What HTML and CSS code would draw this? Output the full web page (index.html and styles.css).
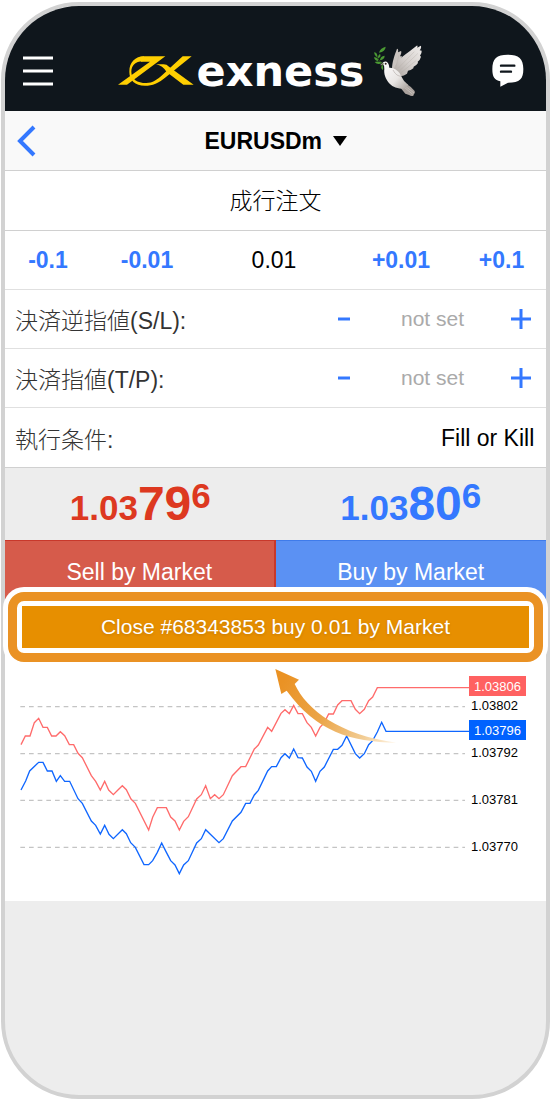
FILE: index.html
```
<!DOCTYPE html>
<html lang="ja">
<head>
    <meta charset="utf-8">
    <meta name="viewport" content="width=device-width, initial-scale=1">
    <title>EURUSDm 成行注文</title>
    <link rel="stylesheet" href="styles.css">
</head>
<body>
<div class="phone">
    <header class="header">
        <button class="icon-btn" type="button" aria-label="menu">
            <svg width="30" height="30" viewBox="0 0 30 30"><path d="M0 2h30M0 15h30M0 28h30" stroke="#fff" stroke-width="3"/></svg>
        </button>
        <div class="logo">
            <svg class="mark" width="78" height="32" viewBox="348 162 234 96" fill="#ffcf01">
                <path d="M415 168Q424 166 432 166H493L378 251H351L447 182H420Z"/>
                <path d="M430 166C402 166 385 184 385 212C385 237 402 254 432 254C455 254 472 247 496 227L572 166H545L484 222C468 236 455 246 436 246C408 246 391 234 391 212C391 194 403 181 425 181Z"/>
                <path d="M465 190Q485 194 497 213L547 251H578L504 197Q497 190 488 190Z"/>
            </svg>
            <span class="brand">exness</span>
            <svg class="dove" width="48" height="52" viewBox="18 12 144 156">
                <defs>
                    <linearGradient id="wing" x1="0" y1="1" x2="1" y2="0">
                        <stop offset="0" stop-color="#aaa39e"/>
                        <stop offset=".5" stop-color="#d6d1ce"/>
                        <stop offset="1" stop-color="#f0edeb"/>
                    </linearGradient>
                    <linearGradient id="body" x1="0" y1="0" x2="1" y2="1">
                        <stop offset="0" stop-color="#fff"/>
                        <stop offset=".6" stop-color="#e9e6e4"/>
                        <stop offset="1" stop-color="#a8a19c"/>
                    </linearGradient>
                </defs>
                <path d="M72 86C72 62 80 42 87 23Q92 24 90 34L99 30Q102 34 96 46L102 46L94 88Z" fill="#c9c3bf"/>
                <path d="M76 88C88 50 118 38 146 14Q150 12 148 20L158 14Q162 18 155 28L161 29Q162 36 156 44L159 47Q157 56 149 62L150 66Q145 74 137 77L136 82Q128 89 120 89L117 98Q108 105 98 106Z" fill="url(#wing)"/>
                <path d="M90 82L139 32M94 90L150 37M98 96L145 58M84 76L93 43" stroke="#b1aaa5" stroke-width="1" fill="none"/>
                <path d="M98 126L117 130Q132 139 140 150Q142 157 138 159L136 164Q130 167 123 162L112 158Q102 144 91 136Z" fill="#aaa29d"/>
                <path d="M108 138L134 160M109 133L138 156" stroke="#d0cac6" stroke-width="2"/>
                <path d="M43 67Q48 59 56 62Q63 66 64 80C80 79 95 91 101 108Q106 121 121 132L109 143Q78 143 65 128C52 114 47 98 49 84Q50 74 43 67Z" fill="url(#body)"/>
                <path d="M75 87Q86 108 101 105" stroke="#b8b1ad" stroke-width="2" fill="none"/>
                <path d="M36 73L43 66L49 70Z" fill="#a79a92"/>
                <circle cx="53" cy="68" r="3" fill="#342824"/>
                <path d="M24 38Q29 61 47 68M44 70L41 82" stroke="#426d2b" stroke-width="2" fill="none"/>
                <g fill="#4b9a33">
                    <path d="M33 35Q36 21 53 17Q52 32 33 35Z"/>
                    <path d="M19 33Q29 36 28 48Q18 44 19 33Z"/>
                    <path d="M30 52Q29 43 36 38Q41 47 30 52Z"/>
                    <path d="M18 49Q29 48 31 60Q20 60 18 49Z"/>
                    <path d="M36 58Q36 46 50 44Q50 55 36 58Z"/>
                    <path d="M20 63Q31 59 42 66Q29 74 20 63Z"/>
                    <path d="M41 71Q48 75 44 88Q38 79 41 71Z"/>
                </g>
            </svg>
        </div>
        <button class="icon-btn" type="button" aria-label="chat">
            <svg width="32" height="33" viewBox="668 160 96 99">
                <path d="M669 206C669 173 682 162 715 162S762 173 762 205C762 235 752 246 716 246L693 258V242C676 239 669 229 669 206Z" fill="#fff"/>
                <path d="M695 195H735M695 213H725" stroke="#0f161c" stroke-width="7" stroke-linecap="round"/>
            </svg>
        </button>
    </header>

    <main class="order">
        <div class="symbol-bar">
            <button class="icon-btn back" type="button" aria-label="back">
                <svg width="20" height="32" viewBox="0 0 20 32"><path d="M17 2L3 16L17 30" fill="none" stroke="#3478ff" stroke-width="4"/></svg>
            </button>
            <div class="symbol">
                <select aria-label="symbol"><option>EURUSDm</option></select>
                <svg width="14" height="10" viewBox="0 0 14 10"><path d="M0 0H14L7 10Z"/></svg>
            </div>
        </div>

        <div class="row type">
            <select aria-label="注文種別"><option>成行注文</option></select>
        </div>

        <div class="row volume">
            <button type="button">-0.1</button>
            <button type="button">-0.01</button>
            <input type="text" value="0.01" aria-label="volume">
            <button type="button">+0.01</button>
            <button type="button">+0.1</button>
        </div>

        <div class="row level">
            <label for="sl">決済逆指値(S/L):</label>
            <button type="button" aria-label="S/L -"><svg width="20" height="20" viewBox="0 0 20 20"><path d="M4 10H16"/></svg></button>
            <input id="sl" type="text" placeholder="not set">
            <button type="button" aria-label="S/L +"><svg width="20" height="20" viewBox="0 0 20 20"><path d="M0 10H20M10 0V20"/></svg></button>
        </div>
        <div class="row level">
            <label for="tp">決済指値(T/P):</label>
            <button type="button" aria-label="T/P -"><svg width="20" height="20" viewBox="0 0 20 20"><path d="M4 10H16"/></svg></button>
            <input id="tp" type="text" placeholder="not set">
            <button type="button" aria-label="T/P +"><svg width="20" height="20" viewBox="0 0 20 20"><path d="M0 10H20M10 0V20"/></svg></button>
        </div>
        <div class="row fill">
            <label for="policy">執行条件:</label>
            <select id="policy"><option>Fill or Kill</option></select>
        </div>

        <div class="prices">
            <div class="price bid">1.03<b>79</b><sup>6</sup></div>
            <div class="price ask">1.03<b>80</b><sup>6</sup></div>
        </div>

        <div class="deal">
            <button class="sell" type="button">Sell by Market</button>
            <button class="buy" type="button">Buy by Market</button>
        </div>
        <div class="close-box">
            <button class="close" type="button">Close #68343853 buy 0.01 by Market</button>
        </div>

        <svg class="chart" viewBox="0 0 541 239">
            <defs>
                <linearGradient id="fade" gradientUnits="userSpaceOnUse" x1="850" y1="60" x2="1190" y2="248">
                    <stop offset="0" stop-color="#ea9224"/>
                    <stop offset=".4" stop-color="#eba548"/>
                    <stop offset=".75" stop-color="#f2cc93"/>
                    <stop offset="1" stop-color="#fff5e6"/>
                </linearGradient>
            </defs>
            <g class="plot" transform="translate(-5 -2) scale(.33333)">
                <path class="grid" d="M61 140H1395M61 281H1395M61 421H1395M61 562H1395"/>
                <polyline class="line-ask" points="63,254 76,228 90,228 103,188 116,175 129,202 142,202 155,228 168,228 181,215 194,227 208,254 221,254 234,280 247,293 274,347 287,364 301,390 314,364 326,390 340,404 353,391 367,377 379,389 393,417 406,430 446,510 458,472 472,443 499,443 512,471 525,483 538,510 551,484 565,470 590,417 604,404 617,377 631,416 644,404 657,416 670,404 697,347 723,320 737,320 763,267 775,255 803,202 815,214 843,160 855,149 868,161 881,136 894,161 907,161 921,188 934,202 947,228 960,202 973,188 986,162 1000,162 1013,135 1026,122 1053,122 1066,148 1079,161 1093,148 1106,122 1118,111 1132,83 1407,83"/>
                <polyline class="line-bid" points="63,390 77,363 89,333 116,307 129,307 142,333 156,333 169,364 181,347 194,364 209,364 234,416 247,430 274,483 287,496 301,522 314,496 327,523 340,536 367,509 379,521 392,548 406,562 432,614 446,614 458,602 472,577 485,549 498,575 512,602 525,615 538,641 551,615 565,602 590,549 604,536 617,509 657,548 670,536 697,483 723,457 737,430 750,430 763,405 775,391 803,333 815,320 829,320 843,293 855,281 868,294 881,267 894,293 907,294 921,321 934,334 947,364 960,334 973,321 1000,268 1013,268 1026,256 1040,228 1066,281 1079,294 1093,281 1106,254 1118,242 1132,216 1145,187 1158,214 1407,214"/>
                <path d="M826 27L897 59L884 72C920 150 1020 225 1190 248C1050 245 950 215 860 92L844 102Z" fill="url(#fade)"/>
            </g>
            <rect x="464" y="14" width="57" height="20" fill="#ff6161"/>
            <rect x="464" y="58" width="57" height="20" fill="#0062ff"/>
            <text class="tag" x="469" y="29">1.03806</text>
            <text class="tag" x="469" y="73">1.03796</text>
            <text x="466" y="48">1.03802</text>
            <text x="466" y="95">1.03792</text>
            <text x="466" y="142">1.03781</text>
            <text x="466" y="189">1.03770</text>
        </svg>
    </main>
</div>
</body>
</html>
```
FILE: styles.css
```
* {
    box-sizing: border-box;
}
body {
    margin: 0;
    padding: 2px 0 1px 1px;
    background: #fff;
    color: #000;
    font-family: "Liberation Sans", "Noto Sans CJK JP", sans-serif;
    font-size: 23px;
}
button, input, select {
    margin: 0;
    padding: 0;
    border: 0;
    border-radius: 0;
    background: none;
    color: inherit;
    font: inherit;
    appearance: none;
}
button, select {
    cursor: pointer;
}
input {
    min-width: 0;
    width: 100%;
    text-align: center;
}
svg {
    display: block;
}
.phone {
    min-height: calc(100vh - 3px);
    border: 4px solid #d2d2d2;
    border-radius: 78px;
    background: #ededed;
}

/* header */
.header {
    display: flex;
    justify-content: space-between;
    align-items: center;
    height: 105px;
    padding: 24px 22px 0 18px;
    border-radius: 74px 74px 0 0;
    background: #0f161c;
}
.logo {
    display: flex;
    align-items: center;
    margin-right: 6px;
}
.brand {
    margin: 0 10px 0 2px;
    color: #fff;
    font: bold 43px/52px "DejaVu Sans", sans-serif;
}

.order {
    background: #fff;
}
.symbol-bar {
    display: grid;
    grid-template-columns: 44px 1fr 44px;
    align-items: center;
    height: 60px;
    border-bottom: 1px solid #d0d0d0;
    background: #f9f9f9;
}
.back {
    padding-left: 12px;
}
.symbol {
    display: flex;
    justify-content: center;
    align-items: center;
    gap: 10px;
    font-weight: bold;
}
.row {
    height: 59px;
    border-bottom: 1px solid #e0e0e0;
}
.row label {
    color: #333;
    font-weight: 300;
}
.type {
    display: flex;
    justify-content: center;
    height: 60px;
    border-color: #d0d0d0;
    font-weight: 300;
}
.volume {
    display: grid;
    grid-template-columns: 86fr 112fr 142fr 112fr 89fr;
}
.volume button {
    color: #3478ff;
    font-weight: bold;
}
.level {
    display: grid;
    grid-template-columns: 1fr 50px 127px 50px;
    align-items: center;
    padding-left: 10px;
}
.level button {
    display: flex;
    justify-content: center;
}
.level path {
    fill: none;
    stroke: #3478ff;
    stroke-width: 3;
}
.level input {
    font-size: 21px;
}
.level input::placeholder {
    color: #aaa;
    opacity: 1;
}
.fill {
    display: flex;
    justify-content: space-between;
    align-items: center;
    height: 60px;
    padding: 0 11px 0 10px;
    border-color: #d0d0d0;
}

/* quotes */
.prices {
    display: grid;
    grid-template-columns: 1fr 1fr;
    height: 72px;
    background: #ededed;
    text-align: center;
}
.price {
    font-size: 35px;
    font-weight: bold;
    line-height: 72px;
    white-space: nowrap;
}
.price b {
    font-size: 48px;
}
.price sup {
    font-size: 35px;
    line-height: 0;
    vertical-align: 12px;
}
.bid {
    color: #dd3820;
}
.ask {
    color: #3478ff;
}
.deal {
    display: grid;
    grid-template-columns: 1fr 1fr;
    height: 64px;
    color: #fff;
    text-shadow: 0 1px 3px rgba(0, 0, 0, .15);
}
.sell {
    border-top: 1px solid #c8382b;
    border-right: 2px solid #c8382b;
    background: #d65b4b;
}
.buy {
    border-top: 1px solid #3f7bea;
    background: #5b91f3;
}
.close-box {
    position: relative;
    margin: -12px 3px 0;
    padding: 5px;
    border: 9px solid #ea9224;
    border-radius: 16px;
    background: #fff;
    box-shadow: 0 0 0 5px #fff;
}
.close {
    width: 100%;
    height: 42px;
    background: #e78f00;
    color: #fff;
    font-size: 21px;
    text-shadow: 0 1px 3px rgba(0, 0, 0, .15);
}

/* chart */
.chart {
    width: 100%;
    height: auto;
    font-size: 13px;
}
.plot polyline {
    fill: none;
    stroke-width: 4;
}
.grid {
    stroke: #c4c4c4;
    stroke-width: 4;
    stroke-dasharray: 14 12;
}
.line-ask {
    stroke: #ff6b6b;
}
.line-bid {
    stroke: #0f66ff;
}
.tag {
    fill: #fff;
}
```
